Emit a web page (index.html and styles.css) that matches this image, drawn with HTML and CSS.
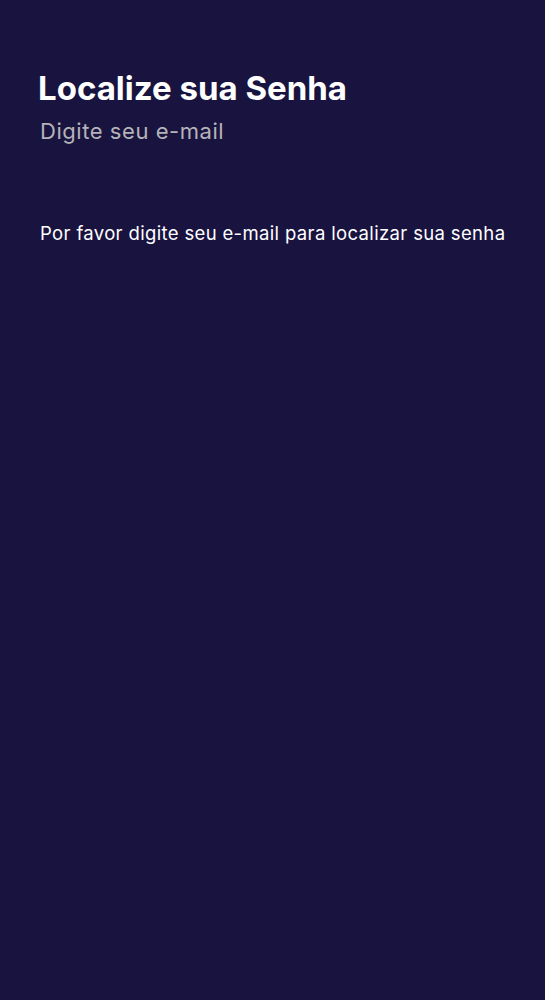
FILE: index.html
```html
<!DOCTYPE html>
<html lang="pt">
<head>
<meta charset="utf-8">
<link rel="stylesheet" href="styles.css">
</head>
<body>
<main class="page">
  <header class="head">
    <h1 class="title">Localize sua Senha</h1>
    <p class="subtitle">Digite seu e-mail</p>
  </header>
  <p class="info">Por favor digite seu e-mail para localizar sua senha</p>
</main>
</body>
</html>
```
FILE: styles.css
```css
html, body {
  margin: 0;
  padding: 0;
  background: #19133f;
  height: 100%;
}
.page {
  padding: 68px 30px 0 38px;
  font-family: Inter, "Noto Sans", sans-serif;
  color: #ffffff;
}
.head {
  display: flex;
  flex-direction: column;
}
.title {
  margin: 0;
  font-size: 33px;
  font-weight: 700;
  line-height: 40px;
  letter-spacing: 0;
}
.subtitle {
  margin: 9px 0 0 2px;
  font-size: 22px;
  line-height: 28px;
  letter-spacing: 0.55px;
  color: #b5b3b9;
}
.info {
  margin: 76px 0 0 2px;
  font-size: 18.5px;
  line-height: 24px;
  letter-spacing: 0.35px;
  white-space: nowrap;
}
```
